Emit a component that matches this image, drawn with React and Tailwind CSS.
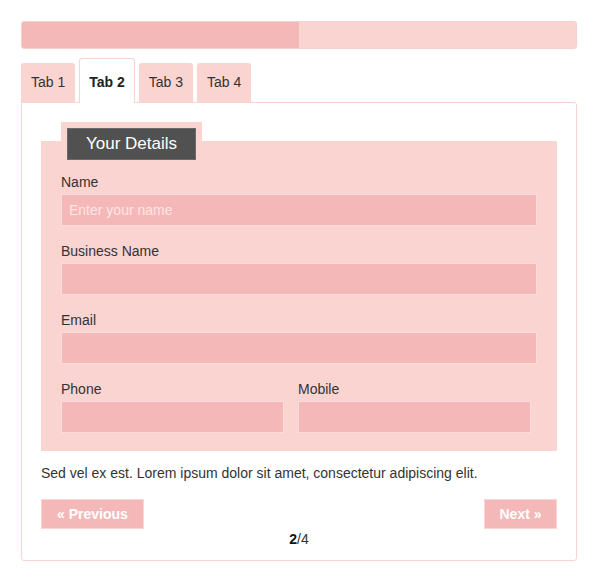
import { useState } from 'react';

const tabs = ['Tab 1', 'Tab 2', 'Tab 3', 'Tab 4'];

function Field({ label, placeholder, className = '' }) {
  return (
    <div className={className}>
      <label className="mb-[2px] block h-5 leading-5 text-sm text-[#333]">{label}</label>
      <input
        type="text"
        placeholder={placeholder}
        className="block h-8 w-full border border-[#fbdcd8] bg-[#f5b8b9] px-[7px] text-sm text-white placeholder:text-[#fde6e4] outline-none"
      />
    </div>
  );
}

export default function App() {
  const [active, setActive] = useState(1);

  return (
    <div className="min-h-[581px] bg-white pl-[21px] pr-[23px] pt-[21px] font-['Liberation_Sans',Arial,sans-serif] text-sm text-[#333]">
      <div className="h-[28px] overflow-hidden rounded-[3px] border border-[#f9d0cb] bg-[#fad4d0]">
        <div className="h-full w-[50%] bg-[#f5b8b9]"></div>
      </div>

      <div className="mt-[9px] -mb-px flex items-end gap-1">
        {tabs.map((t, i) =>
          i === active ? (
            <button
              key={t}
              onClick={() => setActive(i)}
              className="relative z-10 h-[45px] rounded-t-[3px] border border-b-0 border-[#fad4d0] bg-white px-[9px] pt-[13px] pb-[11px] text-sm font-bold leading-5 text-[#222]"
            >
              {t}
            </button>
          ) : (
            <button
              key={t}
              onClick={() => setActive(i)}
              className="h-[40px] rounded-t-[3px] bg-[#fad4d0] px-[10px] pt-[9px] pb-[11px] text-sm leading-5 text-[#333]"
            >
              {t}
            </button>
          )
        )}
      </div>

      <div className="rounded-b-[3px] rounded-tr-[3px] border border-[#fad4d0] px-[19px] pt-[19px] pb-[11px]">
        <div className="mt-[19px] flow-root bg-[#fad4d0] px-5 pb-[18px]">
          <div className="-mt-[19px] w-fit bg-[#fad4d0] p-[6px]">
            <div className="flex h-8 w-[129px] items-center justify-center border border-[#6a6a6a] bg-[#515151] text-[17px] text-white">
              Your Details
            </div>
          </div>

          <Field label="Name" placeholder="Enter your name" className="mt-[6px]" />
          <Field label="Business Name" className="mt-[15px]" />
          <Field label="Email" className="mt-[15px]" />

          <div className="mt-[15px] flex">
            <Field label="Phone" className="w-[223px]" />
            <Field label="Mobile" className="ml-[14px] w-[233px]" />
          </div>
        </div>

        <p className="mt-3 leading-5">
          Sed vel ex est. Lorem ipsum dolor sit amet, consectetur adipiscing elit.
        </p>

        <div className="mt-4 flex justify-between">
          <button className="h-[30px] w-[103px] border border-[#fbd6d2] bg-[#f5b8b9] text-sm font-bold text-white">
            « Previous
          </button>
          <button className="h-[30px] w-[73px] border border-[#fbd6d2] bg-[#f5b8b9] text-sm font-bold text-white">
            Next »
          </button>
        </div>

        <div className="text-center leading-5 text-[#333]">
          <span className="font-bold text-[#111]">2</span>/4
        </div>
      </div>
    </div>
  );
}
